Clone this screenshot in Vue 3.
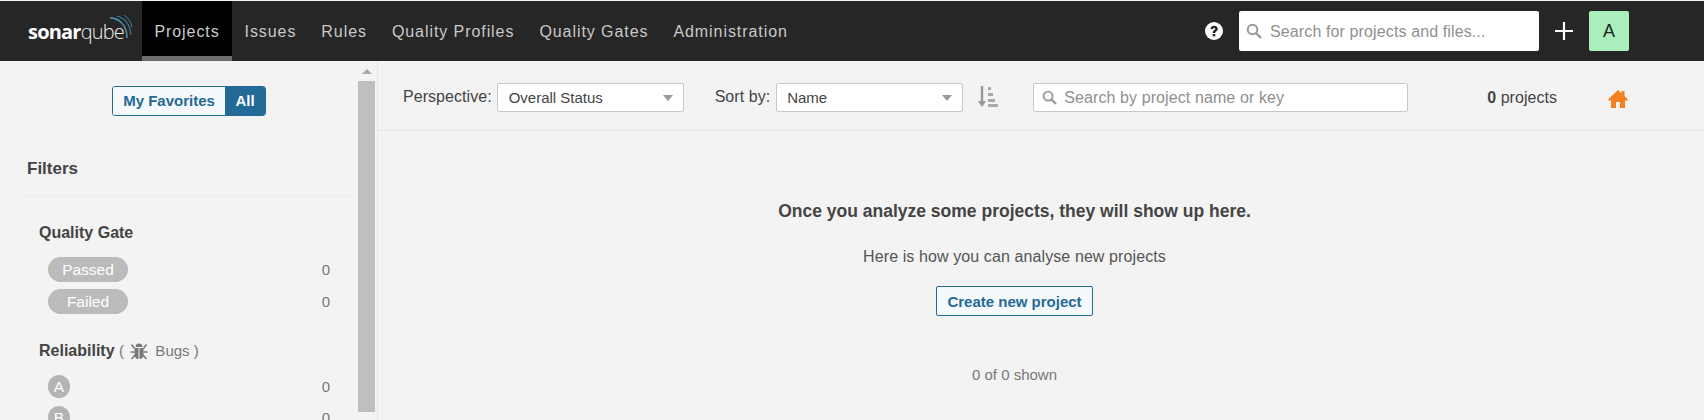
<script setup>
const navItems = ['Issues', 'Rules', 'Quality Profiles', 'Quality Gates', 'Administration']
</script>

<template>
  <div class="page">
    <header class="nav">
      <div class="logo">
        <span class="logo-bold">sonar</span><span class="logo-light">qube</span>
        <svg class="logo-arcs" viewBox="0 0 26 26" width="26" height="26">
          <path d="M3 3C12 3 20 10 20 23" fill="none" stroke="#4f9bc0" stroke-width="1.4"/>
          <path d="M10 1C18 3 23 10 24 20" fill="none" stroke="#3f7f9f" stroke-width="1.1"/>
          <path d="M17 0C21 3 24 7 25 12" fill="none" stroke="#3f7f9f" stroke-width="1"/>
        </svg>
      </div>
      <a class="tab active">Projects</a>
      <a v-for="item in navItems" :key="item" class="tab">{{ item }}</a>
      <div class="nav-right">
        <svg class="help" viewBox="0 0 18 18" width="18" height="18">
          <circle cx="9" cy="9" r="9" fill="#fff"/>
          <path d="M5.400 6.800C5.600 2.600 12.800 2.600 12.800 6.800c0 2.500-2.500 2.500-2.500 4.200H7.700c0-3 2.500-2.800 2.500-4.200 0-1.300-2.100-1.300-2.300.5z" fill="#262626"/>
          <rect x="7.700" y="12" width="2.600" height="2.400" fill="#262626"/>
        </svg>
        <div class="global-search">
          <svg viewBox="0 0 16 16" width="16" height="16">
            <circle cx="6.500" cy="6.500" r="4.800" fill="none" stroke="#999" stroke-width="2"/>
            <path d="M10 10l5 5" stroke="#999" stroke-width="2.400"/>
          </svg>
          <span>Search for projects and files...</span>
        </div>
        <svg class="plus" viewBox="0 0 18 18" width="18" height="18">
          <path d="M9 0v18M0 9h18" stroke="#fff" stroke-width="2.200"/>
        </svg>
        <div class="avatar">A</div>
      </div>
    </header>

    <div class="body">
      <aside class="side">
        <div class="side-content">
          <div class="toggle-row">
            <div class="toggle">
              <span class="toggle-off">My Favorites</span>
              <span class="toggle-on">All</span>
            </div>
          </div>
          <h2 class="filters">Filters</h2>
          <section class="facet">
            <h3 class="facet-title">Quality Gate</h3>
            <div class="row">
              <span class="pill">Passed</span><span class="count">0</span>
            </div>
            <div class="row">
              <span class="pill">Failed</span><span class="count">0</span>
            </div>
          </section>
          <section class="facet facet-second">
            <h3 class="facet-title">Reliability
              <span class="facet-note">(
                <svg class="bug" viewBox="0 0 18 18" width="18" height="18">
                  <path d="M5.500 5a3.500 3.500 0 0 1 7 0z" fill="#777"/>
                  <path d="M4.500 6h4v11c-2.500 0-4-2-4-4zM9.500 6h4v7c0 2-1.500 4-4 4z" fill="#777"/>
                  <path d="M1.500 2.500l3 4M16.500 2.500l-3 4M0.500 10h4M17.500 10h-4M1.500 17l3.500-4M16.500 17l-3.500-4" stroke="#777" stroke-width="1.500" fill="none"/>
                </svg>
                Bugs )</span>
            </h3>
            <div class="row rating-row">
              <span class="rating">A</span><span class="count">0</span>
            </div>
            <div class="row rating-row">
              <span class="rating">B</span><span class="count">0</span>
            </div>
          </section>
        </div>
        <div class="scrollbar">
          <span class="scroll-arrow"></span>
          <div class="scroll-thumb"></div>
        </div>
      </aside>

      <main class="main">
        <div class="toolbar">
          <label class="field-label">Perspective:</label>
          <div class="select select-wide">
            <span>Overall Status</span><i class="caret"></i>
          </div>
          <label class="field-label sort-label">Sort by:</label>
          <div class="select select-sort">
            <span>Name</span><i class="caret"></i>
          </div>
          <svg class="sort-icon" viewBox="0 0 20 22" width="20" height="22">
            <path d="M4 0v17" stroke="#999" stroke-width="2.400"/>
            <path d="M0 15h8l-4 6z" fill="#999"/>
            <path d="M10 1h3v3h-3zM10 7h5v3h-5zM10 13h7v3h-7zM10 18h10v3H10z" fill="#aaa"/>
          </svg>
          <div class="project-search">
            <svg viewBox="0 0 16 16" width="15" height="15">
              <circle cx="6.500" cy="6.500" r="4.800" fill="none" stroke="#999" stroke-width="2"/>
              <path d="M10 10l5 5" stroke="#999" stroke-width="2.400"/>
            </svg>
            <span>Search by project name or key</span>
          </div>
          <div class="project-count"><b>0</b> projects</div>
          <svg class="home" viewBox="0 0 20 20" width="20" height="20">
            <path d="M10 1L0 10.500l1.500 1.500L3 10.800V19h5v-6h4v6h5v-8.200l1.500 1.200L20 10.500 16.500 7V2h-3v2.200z" fill="#f4811f"/>
          </svg>
        </div>
        <div class="empty">
          <h3 class="empty-title">Once you analyze some projects, they will show up here.</h3>
          <p class="empty-text">Here is how you can analyse new projects</p>
          <button class="create">Create new project</button>
          <p class="shown">0 of 0 shown</p>
        </div>
      </main>
    </div>
  </div>
</template>

<style>
html, body { margin: 0; height: 420px; overflow: hidden; background: #f3f3f3; }
</style>

<style scoped>
* { box-sizing: border-box; }
.page { height: 420px; overflow: hidden; padding-top: 1px; background: #f3f3f3; font-family: "Liberation Sans", Arial, sans-serif; color: #444; display: flex; flex-direction: column; }
.nav { height: 60px; flex: none; background: #262626; display: flex; align-items: stretch; padding-left: 28px; }
.logo { width: 114px; position: relative; display: flex; align-items: center; padding-top: 1px; color: #fff; font-family: "Open Sans", sans-serif; font-size: 20px; letter-spacing: -0.8px; }
.logo-bold { font-weight: 700; }
.logo-light { font-weight: 300; color: #eee; }
.logo-arcs { position: absolute; left: 79px; top: 14px; }
.tab { padding: 0 12.500px; font-size: 16px; letter-spacing: 0.93px; color: #c9c9c9; border-bottom: 5px solid transparent; height: 60px; line-height: 62px; }
.tab.active { background: #000; border-bottom-color: #6e6e6e; color: #ccc; width: 90px; text-align: center; padding: 0; }
.nav-right { position: absolute; left: 1205px; top: 1px; height: 60px; display: flex; align-items: center; }
.help { margin-right: 16px; }
.global-search { width: 300px; height: 40px; background: #fff; border-radius: 2px; display: flex; align-items: center; padding-left: 7px; color: #8f8f8f; }
.global-search span { margin-left: 8px; font-size: 16px; letter-spacing: 0.12px; padding-top: 1px; }
.plus { margin-left: 16px; }
.avatar { margin-left: 16px; width: 40px; height: 40px; border-radius: 2px; background: #aaeebb; color: #222; display: flex; align-items: center; justify-content: center; font-size: 18px; }
.body { flex: 1; display: flex; min-height: 0; }
.side { width: 378px; flex: none; display: flex; border-right: 1px solid #e6e6e6; overflow: hidden; }
.side-content { width: 358px; flex: none; }
.toggle-row { display: flex; justify-content: center; padding: 25px 0 0 20px; width: 358px; }
.toggle { display: flex; height: 30px; width: 154px; border: 1px solid #236a97; border-radius: 3px; font-size: 15px; font-weight: 700; line-height: 28px; overflow: hidden; margin-right: 4px; transform: translateX(2px); }
.toggle-off { flex: 1; text-align: center; color: #236a97; background: #f6f9fb; }
.toggle-on { width: 40px; text-align: center; background: #236a97; color: #fff; }
.filters { margin: 0 6px 0 25px; padding: 43px 0 0 2px; border-bottom: 1px solid #ececec; font-size: 17px; line-height: 20px; color: #444; font-weight: 700; height: 81px; }
.facet { padding: 0 0 0 39px; }
.facet-title { margin: 0; padding-top: 26px; font-size: 16px; line-height: 20px; font-weight: 700; color: #444; }
.facet-second .facet-title { padding-top: 20px; }
.facet-note { font-weight: 400; font-size: 15px; color: #777; }
.bug { vertical-align: -4px; margin: 0 3px 0 2px; }
.row { display: flex; align-items: center; justify-content: space-between; height: 25px; margin: 0 0 7px 9px; width: 282px; font-size: 15px; }
.facet-title + .row { margin-top: 14px; }
.pill { width: 80px; height: 25px; border-radius: 13px; background: #bbb; color: #fff; display: flex; align-items: center; justify-content: center; font-size: 15.500px; }
.count { color: #777; font-size: 15px; }
.rating-row { height: 23px; margin-bottom: 8px; }
.rating { width: 22px; height: 23px; border-radius: 50%; background: #b4b4b4; color: #fff; display: flex; align-items: center; justify-content: center; font-size: 15.500px; }
.facet-second .facet-title + .row { margin-top: 14px; }
.scrollbar { width: 17px; flex: none; display: flex; flex-direction: column; align-items: center; }
.scroll-arrow { margin-top: 8px; width: 0; height: 0; border-left: 5px solid transparent; border-right: 5px solid transparent; border-bottom: 5px solid #a8a8a8; }
.scroll-thumb { margin-top: 7px; width: 17px; height: 331px; background: #bfbfbf; }
.main { flex: 1; min-width: 0; }
.toolbar { height: 70px; border-bottom: 1px solid #e6e6e6; display: flex; align-items: flex-start; padding: 22px 0 0 25px; }
.field-label { font-size: 16px; line-height: 29px; margin-top: -1px; color: #444; letter-spacing: 0.05px; }
.select { height: 29px; background: #fff; border: 1px solid #c8c8c8; border-radius: 2px; display: flex; align-items: center; justify-content: space-between; padding: 0 10px; font-size: 15px; color: #444; }
.select-wide { width: 187px; margin-left: 5px; padding-left: 11px; }
.select-sort { width: 187px; margin-left: 6px; }
.sort-label { margin-left: 31px; }
.caret { width: 0; height: 0; border-left: 5.500px solid transparent; border-right: 5.500px solid transparent; border-top: 6px solid #999; }
.sort-icon { margin: 3px 0 0 15px; flex: none; }
.project-search { width: 375px; height: 29px; margin-left: 35px; background: #fff; border: 1px solid #c8c8c8; border-radius: 2px; display: flex; align-items: center; padding-left: 8px; color: #8f8f8f; font-size: 16px; letter-spacing: 0.1px; }
.project-search span { margin-left: 7px; }
.project-count { margin-left: 79px; font-size: 16px; line-height: 29px; color: #444; letter-spacing: 0.05px; }
.home { margin: 6px 0 0 51px; flex: none; }
.empty { text-align: center; padding-top: 70px; width: 1273px; }
.empty-title { margin: 0; font-size: 17.500px; line-height: 20px; font-weight: 700; color: #444; }
.empty-text { margin: 26px 0 0; font-size: 16px; line-height: 20px; color: #555; letter-spacing: 0.1px; }
.create { display: block; margin: 19px auto 0; width: 157px; height: 30px; border: 1px solid #236a97; border-radius: 2px; background: #f6f9fb; color: #236a97; font-family: inherit; font-size: 15px; font-weight: 700; padding: 0; }
.shown { margin: 49px 0 0; font-size: 15px; line-height: 20px; color: #777; }
</style>
